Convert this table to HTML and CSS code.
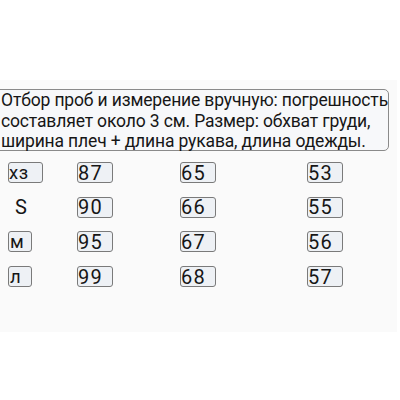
FILE: index.html
```html
<!DOCTYPE html>
<html>
<head>
<meta charset="utf-8">
<link rel="stylesheet" href="styles.css">
</head>
<body>
<div class="panel">
  <div class="note">Отбор проб и измерение вручную: погрешность составляет около 3 см. Размер: обхват груди, ширина плеч + длина рукава, длина одежды.</div>
  <div class="table">
    <span class="cell w35">хз</span><span class="cell">87</span><span class="cell">65</span><span class="cell">53</span>
    <span class="plain">S</span><span class="cell">90</span><span class="cell">66</span><span class="cell">55</span>
    <span class="cell w24">м</span><span class="cell">95</span><span class="cell">67</span><span class="cell">56</span>
    <span class="cell w24">л</span><span class="cell">99</span><span class="cell">68</span><span class="cell">57</span>
  </div>
</div>
</body>
</html>
```
FILE: styles.css
```css
html, body {
  margin: 0;
  padding: 0;
  background: #ffffff;
}
body {
  font-family: Roboto, "Noto Sans", sans-serif;
  color: #161616;
  width: 400px;
  height: 400px;
  overflow: hidden;
}
.panel {
  margin-top: 80px;
  width: 397px;
  height: 252px;
  background: #fafafa;
  padding-top: 9px;
  box-sizing: border-box;
}
.note {
  margin-left: -5px;
  width: 394px;
  height: 62px;
  box-sizing: border-box;
  border: 1px solid #8a8a8a;
  border-radius: 5px;
  background: #f7f8fa;
  padding: 0 0 0 5px;
  font-size: 17.5px;
  line-height: 20.5px;
  letter-spacing: -0.15px;
}
.table {
  display: grid;
  grid-template-columns: 69px 103px 127px auto;
  grid-auto-rows: 21px;
  row-gap: 13.7px;
  padding-left: 8px;
  margin-top: 11px;
  align-items: center;
}
.cell {
  display: flex;
  align-items: center;
  width: 36px;
  height: 21px;
  box-sizing: border-box;
  border: 1px solid #7a7a7a;
  border-radius: 3px;
  background: #eef1f5;
  font-size: 20px;
  line-height: 20px;
  letter-spacing: 1.2px;
  white-space: nowrap;
}
.w35 { width: 35px; font-size: 18.5px; letter-spacing: 0.5px; }
.w24 { width: 24px; font-size: 18.5px; letter-spacing: 0; padding-left: 1px; }
.plain {
  font-size: 20px;
  line-height: 21px;
  padding-left: 7px;
}
```
